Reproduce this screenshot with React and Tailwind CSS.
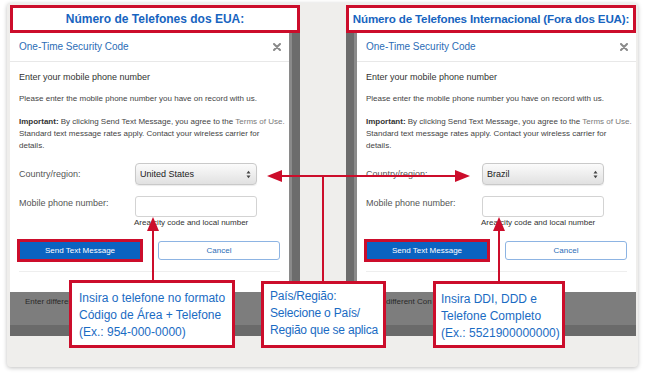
import React from 'react';

const CloseIcon = () => (
  <svg width="8" height="8" viewBox="0 0 8 8" className="shrink-0">
    <path d="M1 1L7 7M7 1L1 7" stroke="#8a8a8a" strokeWidth="2" strokeLinecap="round" />
  </svg>
);

const SelectArrows = () => (
  <svg width="5" height="9" viewBox="0 0 5 9">
    <polygon points="0.5,3.5 2.5,0.8 4.5,3.5" fill="#444" />
    <polygon points="0.5,5.5 2.5,8.2 4.5,5.5" fill="#444" />
  </svg>
);

const SecurityModal = ({ country }) => (
  <div className="flex h-full w-[279px] flex-col bg-white">
    <div className="flex h-[29px] items-center justify-between border-b border-[#e8e8e8] pl-[9px] pr-[8px]">
      <span className="text-[10px] leading-[12px] text-[#2c6db6]">One-Time Security Code</span>
      <CloseIcon />
    </div>
    <div className="flex flex-1 flex-col px-[9px]">
      <p className="mt-[9px] text-[9px] leading-[12px] text-[#333]">Enter your mobile phone number</p>
      <p className="mt-[10px] whitespace-nowrap text-[8px] leading-[12px] text-[#444]">
        Please enter the mobile phone number you have on record with us.
      </p>
      <p className="mt-[11px] whitespace-nowrap text-[8px] leading-[12px] text-[#444]">
        <b className="font-bold text-[#333]">Important:</b> By clicking Send Text Message, you agree to the{' '}
        <span className="text-[#7a7a7a]">Terms of Use.</span>
        <br />
        Standard text message rates apply. Contact your wireless carrier for
        <br />
        details.
      </p>

      <div className="mt-[11px] flex h-[22px] items-center">
        <span className="w-[116px] text-[9px] leading-[12px] text-[#555]">Country/region:</span>
        <div className="flex h-[22px] w-[122px] items-center justify-between rounded-[4px] border border-[#c9c9c9] bg-linear-to-b from-[#fbfbfb] to-[#e1e1e1] pl-[4px] pr-[5px] shadow-[0_1px_1px_rgba(0,0,0,0.08)]">
          <span className="text-[9px] leading-[12px] text-[#222]">{country}</span>
          <SelectArrows />
        </div>
      </div>

      <div className="mt-[11px] flex items-start">
        <span className="w-[116px] pt-[1px] text-[9px] leading-[12px] text-[#555]">Mobile phone number:</span>
        <div className="h-[21px] w-[122px] rounded-[3px] border border-[#d3d3d3] bg-white" />
      </div>
      <p className="ml-[115px] mt-[1px] text-[8px] leading-[10px] text-[#333]">Area/city code and local number</p>

      <div className="mt-[11px] flex items-center">
        <div className="-ml-[2px] h-[23px] w-[126px] border-[3px] border-[#cc0d2b]">
          <div className="flex h-full items-center justify-center bg-[#0b63c1] text-[8px] text-white">
            Send Text Message
          </div>
        </div>
        <div className="ml-[15px] flex h-[19px] w-[122px] items-center justify-center rounded-[3px] border border-[#8db4e3] bg-white text-[8px] text-[#2c6db6]">
          Cancel
        </div>
      </div>
      <div className="mt-[9px] h-px bg-[#eeeeee]" />
    </div>
  </div>
);

const Strip = ({ side }) =>
  side === 'right' ? (
    <div className="h-full w-[11px] border-l-[3px] border-[#8a8a8a] bg-[#6c6c6c]" />
  ) : (
    <div className="h-full w-[11px] border-r-[3px] border-[#8a8a8a] bg-[#6c6c6c]" />
  );

const Panel = ({ title, titleClass, country, stripSide }) => (
  <div className="flex w-[290px] flex-col">
    <div className={`flex h-[28px] items-center justify-center whitespace-nowrap border-[3px] border-[#cc0d2b] bg-white font-bold text-[#1764c0] ${titleClass}`}>
      {title}
    </div>
    <div className="flex h-[259px]">
      {stripSide === 'left' && <Strip side="left" />}
      <SecurityModal country={country} />
      {stripSide === 'right' && <Strip side="right" />}
    </div>
    {/* footer link of the modal backdrop, mostly hidden behind the callouts */}
    {stripSide === 'right' ? (
      <div className="flex h-[33px] bg-[#7d7d7d] pl-[15px] pt-[5px]">
        <span className="block h-[10px] w-[44px] overflow-hidden whitespace-nowrap text-[8px] leading-[10px] text-[#2a2a2a]">
          Enter different Contact Method
        </span>
      </div>
    ) : (
      <div className="flex h-[33px] bg-[#7d7d7d] pl-[40px] pt-[5px]">
        <span className="block h-[10px] w-[46px] overflow-hidden whitespace-nowrap text-[8px] leading-[10px] text-[#2a2a2a]">
          different Contact Method
        </span>
      </div>
    )}
    <div className="h-[11px] bg-[#6a6a6a]" />
  </div>
);

const Annotations = () => (
  <svg className="pointer-events-none absolute left-0 top-0" width="646" height="380" viewBox="0 0 646 380">
    <g fill="#cc0d2b" stroke="none">
      {/* arrow to US phone input */}
      <rect x="152" y="229" width="2" height="52" />
      <polygon points="153,217 147,231 159,231" />
      {/* arrow to intl phone input */}
      <rect x="498" y="229" width="2" height="53" />
      <polygon points="499,217 493,231 505,231" />
      {/* country/region connector */}
      <rect x="322" y="175" width="2" height="107" />
      <rect x="280" y="175" width="177" height="2" />
      <polygon points="267,176 282,170 282,182" />
      <polygon points="470,176 455,170 455,182" />
    </g>
  </svg>
);

export default function App() {
  return (
    <div className="relative h-[380px] w-[646px] overflow-hidden bg-white pl-[7px] pt-[3px] font-['Liberation_Sans',Arial,sans-serif]">
      <div className="flex h-[364px] w-[631px] gap-[46px] rounded-[4px] bg-[#efeeec] pl-[3px] pt-[2px] shadow-[0_1px_4px_rgba(0,0,0,0.25)]">
        <Panel
          title="Número de Telefones dos EUA:"
          titleClass="text-[12px]"
          country="United States"
          stripSide="right"
        />
        <Panel
          title="Número de Telefones Internacional (Fora dos EUA):"
          titleClass="text-[11.6px] tracking-[-0.15px]"
          country="Brazil"
          stripSide="left"
        />
      </div>

      <Annotations />

      <div className="absolute left-[69px] top-[280px] h-[68px] w-[166px] whitespace-nowrap border-[3px] border-[#cc0d2b] bg-white pl-[7px] pt-[7px] text-[12px] leading-[17px] text-[#1a6bc3]">
        Insira o telefone no formato
        <br />
        Código de Área + Telefone
        <br />
        (Ex.: 954-000-0000)
      </div>
      <div className="absolute left-[261px] top-[281px] h-[67px] w-[125px] whitespace-nowrap border-[3px] border-[#cc0d2b] bg-white pl-[6px] pt-[4px] text-[12px] leading-[17px] tracking-[-0.2px] text-[#1a6bc3]">
        País/Região:
        <br />
        Selecione o País/
        <br />
        Região que se aplica
      </div>
      <div className="absolute left-[433px] top-[281px] h-[67px] w-[132px] whitespace-nowrap border-[3px] border-[#cc0d2b] bg-white pl-[5px] pt-[7px] text-[12px] leading-[17px] text-[#1a6bc3]">
        Insira DDI, DDD e
        <br />
        Telefone Completo
        <br />
        (Ex.: 5521900000000)
      </div>
    </div>
  );
}
